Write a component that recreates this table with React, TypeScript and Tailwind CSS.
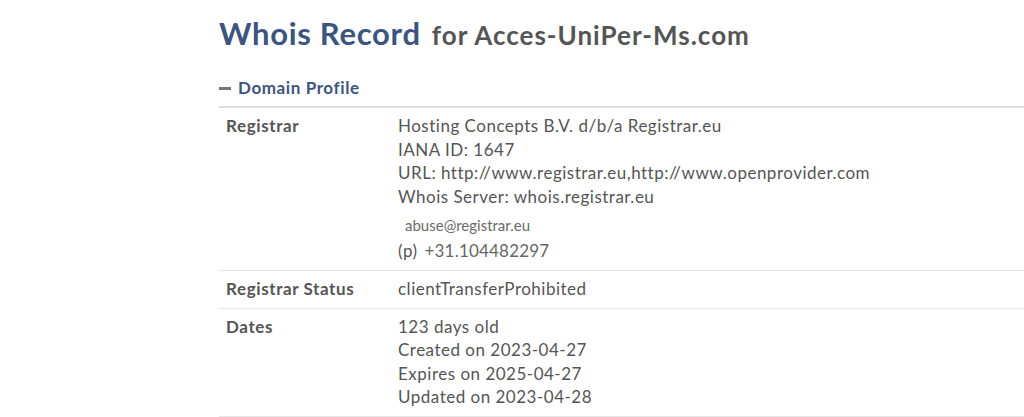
import React from "react";

const rows = [
  {
    label: "Registrar Status",
    lines: ["clientTransferProhibited"],
  },
  {
    label: "Dates",
    lines: [
      "123 days old",
      "Created on 2023-04-27",
      "Expires on 2025-04-27",
      "Updated on 2023-04-28",
    ],
  },
];

function Row({ label, children }: { label: string; children: React.ReactNode }) {
  return (
    <div className="flex border-b border-[#e6e6e6] pt-[6px] pb-[7px]">
      <div className="w-[179px] shrink-0 pl-[7px] text-[17px] leading-[23.6px] font-bold text-[#555] tracking-[0.6px]">
        {label}
      </div>
      <div className="text-[17px] leading-[23.6px] text-[#555] tracking-[0.5px]">{children}</div>
    </div>
  );
}

export default function App() {
  return (
    <div
      className="h-[417px] w-[1024px] overflow-hidden bg-white"
      style={{ fontFamily: "Lato, 'Open Sans', sans-serif" }}
    >
      <div className="ml-[219px] pt-[13px]">
        <h1 className="flex items-baseline gap-[11px] leading-[40px]">
          <span className="text-[31px] font-bold text-[#3b5583] tracking-[0.7px]">Whois Record</span>
          <span className="text-[26px] font-bold text-[#555] tracking-[1px]">for Acces-UniPer-Ms.com</span>
        </h1>

        <div className="mt-[21px] flex items-center gap-[7px] pb-[6px]">
          <span className="h-[3px] w-[12px] bg-[#777]" />
          <span className="text-[17px] leading-[24px] font-bold text-[#3b5583] tracking-[0.6px]">
            Domain Profile
          </span>
        </div>

        <div className="border-t-2 border-[#dcdcdc]">
          <Row label="Registrar">
            <div>Hosting Concepts B.V. d/b/a Registrar.eu</div>
            <div>IANA ID: 1647</div>
            <div>URL: http://www.registrar.eu,http://www.openprovider.com</div>
            <div>Whois Server: whois.registrar.eu</div>
            <div className="flex h-[31px] items-center pt-[4px] pl-[7px] text-[15px] tracking-normal text-[#6a6a6a]">
              abuse@registrar.eu
            </div>
            <div className="flex items-center gap-[7px]">
              <span>(p)</span>
              <span className="text-[#666] tracking-[0.2px]">+31.104482297</span>
            </div>
          </Row>
          {rows.map((r) => (
            <Row key={r.label} label={r.label}>
              {r.lines.map((l) => (
                <div key={l}>{l}</div>
              ))}
            </Row>
          ))}
        </div>
      </div>
    </div>
  );
}
